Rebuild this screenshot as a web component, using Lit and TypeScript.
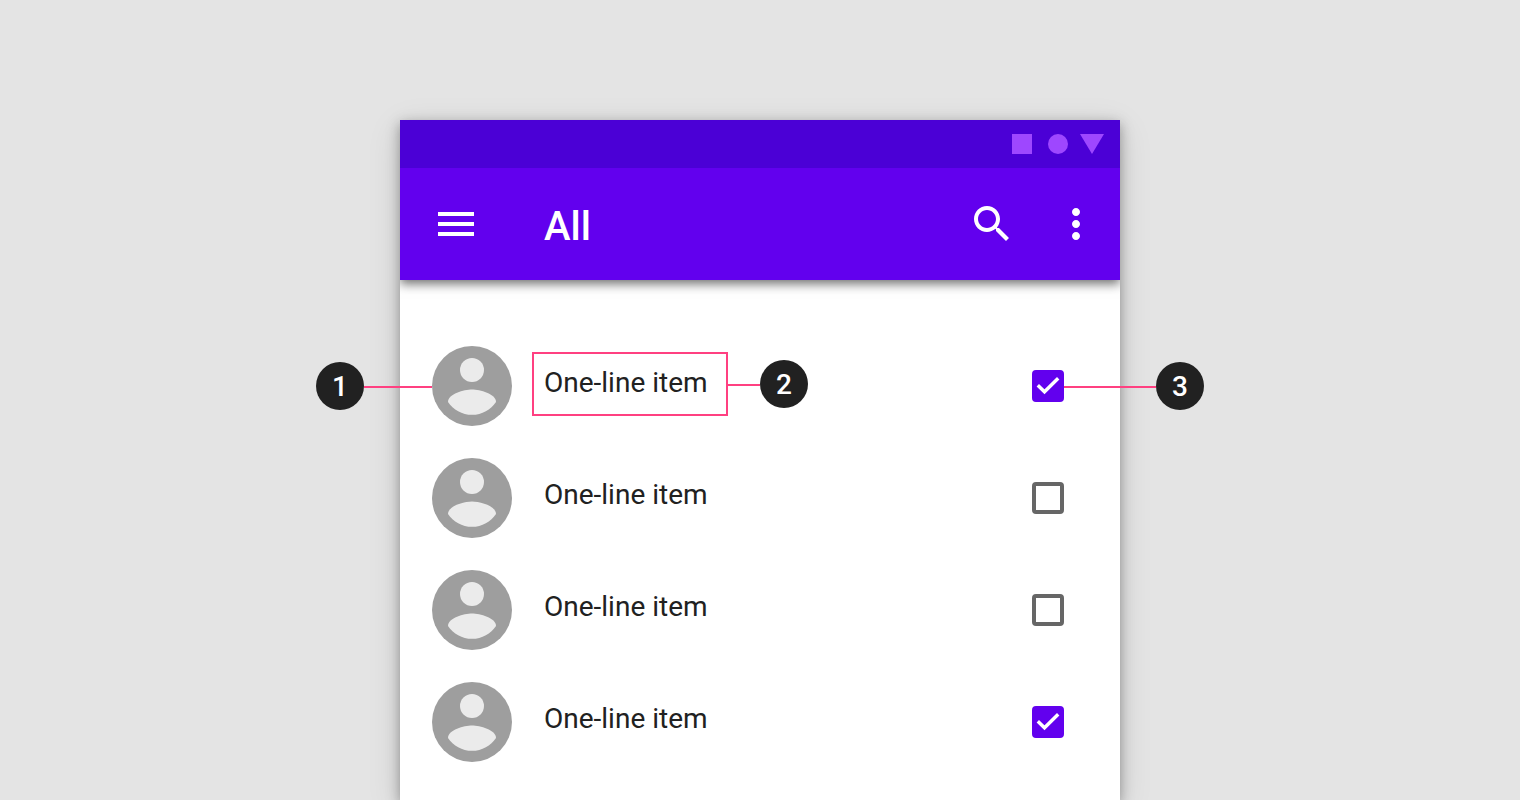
import { LitElement, html, css, nothing } from "lit";
import { customElement, property, state } from "lit/decorators.js";

@customElement("callout-badge")
export class CalloutBadge extends LitElement {
  @property() label = "";
  @property({ reflect: true }) side: "left" | "right" = "right";

  static styles = css`
    :host {
      position: absolute;
      left: 100%;
      top: 50%;
      display: flex;
      align-items: center;
      width: var(--reach, 140px);
      height: 48px;
      margin-top: -24px;
    }
    :host([side="left"]) {
      left: auto;
      right: 100%;
      flex-direction: row-reverse;
    }
    .line {
      flex: 1;
      box-sizing: border-box;
      height: 4px;
      border-bottom: 2px solid #ff4081;
    }
    .badge {
      box-sizing: border-box;
      width: 48px;
      height: 48px;
      padding-top: 1px;
      border-radius: 50%;
      background: #212121;
      color: #fff;
      font: 500 28px/48px Roboto, sans-serif;
      text-align: center;
    }
  `;

  render() {
    return html`<span class="line"></span><span class="badge">${this.label}</span>`;
  }
}

interface Item {
  text: string;
  checked: boolean;
}

@customElement("app-root")
export class AppRoot extends LitElement {
  @state() private items: Item[] = [
    { text: "One-line item", checked: true },
    { text: "One-line item", checked: false },
    { text: "One-line item", checked: false },
    { text: "One-line item", checked: true },
  ];

  static styles = css`
    :host {
      display: flex;
      justify-content: center;
      box-sizing: border-box;
      height: 100vh;
      padding-top: 120px;
      overflow: hidden;
      background: #e4e4e4;
      color: #212121;
      font-family: Roboto, sans-serif;
    }
    .device {
      width: 100%;
      max-width: 720px;
      background: #fff;
      box-shadow: 0 4px 12px rgba(0, 0, 0, 0.34), 0 8px 32px rgba(0, 0, 0, 0.12);
    }
    .top {
      background: #6200ee;
      color: #fff;
      box-shadow: 0 4px 10px rgba(0, 0, 0, 0.56);
      clip-path: inset(0 0 -20px 0);
    }
    .status {
      display: flex;
      align-items: center;
      justify-content: flex-end;
      height: 48px;
      padding: 0 16px;
      background: #4b00d6;
    }
    .bar {
      display: flex;
      align-items: center;
      height: 112px;
      padding: 0 20px 0 32px;
    }
    h1 {
      flex: 1;
      margin: 0;
      padding: 6px 0 0 64px;
      font-size: 40px;
      font-weight: 500;
      line-height: 48px;
    }
    button {
      width: 48px;
      height: 48px;
      padding: 0;
      border: 0;
      background: none;
      color: inherit;
    }
    .search {
      margin-right: 36px;
    }
    svg {
      display: block;
      fill: currentColor;
    }
    ul {
      margin: 0;
      padding: 50px 0 0;
      list-style: none;
    }
    li {
      display: flex;
      align-items: center;
      height: 112px;
      padding: 0 56px 0 32px;
    }
    .avatar {
      position: relative;
      --reach: 116px;
    }
    .text {
      flex: 1;
      padding: 0 0 6px 32px;
      font-size: 28px;
      line-height: 32px;
    }
    .words {
      position: relative;
    }
    .frame {
      position: absolute;
      left: -12px;
      top: -15px;
      box-sizing: border-box;
      width: 196px;
      height: 64px;
      border: 2px solid #ff4081;
      --reach: 82px;
    }
    .check {
      position: relative;
      --reach: 140px;
    }
    input {
      appearance: none;
      display: block;
      box-sizing: border-box;
      width: 32px;
      height: 32px;
      margin: 0;
      border: 4px solid #666;
      border-radius: 4px;
    }
    input:checked {
      border-color: #6200ee;
      background: #6200ee;
    }
    .tick {
      position: absolute;
      inset: 0;
      fill: none;
      stroke: #fff;
      stroke-width: 3.4;
      pointer-events: none;
    }
  `;

  private toggle(index: number) {
    this.items = this.items.map((item, i) =>
      i === index ? { ...item, checked: !item.checked } : item
    );
  }

  private row(item: Item, i: number) {
    const noted = i === 0;
    return html`<li>
      <div class="avatar">
        <svg width="80" height="80" viewBox="0 0 80 80" aria-hidden="true">
          <circle cx="40" cy="40" r="40" fill="#9e9e9e" />
          <circle cx="40" cy="24" r="12" fill="#ebebeb" />
          <path
            fill="#ebebeb"
            d="M40 68.8c-10 0-18.84-5.12-24-12.88.12-7.96 16-12.32 24-12.32 7.96 0 23.88 4.36 24 12.32-5.16 7.76-14 12.88-24 12.88z"
          />
        </svg>
        ${noted ? html`<callout-badge side="left" label="1"></callout-badge>` : nothing}
      </div>
      <div class="text">
        <div class="words">
          <label for="item-${i}">${item.text}</label>
          ${noted
            ? html`<div class="frame"><callout-badge label="2"></callout-badge></div>`
            : nothing}
        </div>
      </div>
      <div class="check">
        <input
          id="item-${i}"
          type="checkbox"
          .checked=${item.checked}
          @change=${() => this.toggle(i)}
        />
        ${item.checked
          ? html`<svg class="tick" width="32" height="32" viewBox="0 0 32 32" aria-hidden="true">
              <path d="M5.8 15.3l6.7 6.5L26.2 8.3" />
            </svg>`
          : nothing}
        ${noted ? html`<callout-badge label="3"></callout-badge>` : nothing}
      </div>
    </li>`;
  }

  render() {
    return html`<main class="device">
      <header class="top">
        <div class="status">
          <svg width="92" height="20" viewBox="0 0 92 20" aria-hidden="true">
            <g fill="#9e47ff">
              <path d="M0 0h20v20H0z" />
              <circle cx="46" cy="10" r="10" />
              <path d="M68 0h24L80 20z" />
            </g>
          </svg>
        </div>
        <div class="bar">
          <button aria-label="Menu">
            <svg width="48" height="48" viewBox="0 0 24 24">
              <path d="M3 18h18v-2H3v2zm0-5h18v-2H3v2zm0-7v2h18V6H3z" />
            </svg>
          </button>
          <h1>All</h1>
          <button class="search" aria-label="Search">
            <svg width="48" height="48" viewBox="0 0 24 24">
              <path
                d="M15.5 14h-.79l-.28-.27C15.41 12.59 16 11.11 16 9.5 16 5.91 13.09 3 9.5 3S3 5.91 3 9.5 5.91 16 9.5 16c1.61 0 3.09-.59 4.23-1.57l.27.28v.79l5 4.99L20.49 19l-4.99-5zm-6 0C7.01 14 5 11.99 5 9.5S7.01 5 9.5 5 14 7.01 14 9.5 11.99 14 9.5 14z"
              />
            </svg>
          </button>
          <button aria-label="More options">
            <svg width="48" height="48" viewBox="0 0 24 24">
              <path
                d="M12 8c1.1 0 2-.9 2-2s-.9-2-2-2-2 .9-2 2 .9 2 2 2zm0 2c-1.1 0-2 .9-2 2s.9 2 2 2 2-.9 2-2-.9-2-2-2zm0 6c-1.1 0-2 .9-2 2s.9 2 2 2 2-.9 2-2-.9-2-2-2z"
              />
            </svg>
          </button>
        </div>
      </header>
      <ul>
        ${this.items.map((item, i) => this.row(item, i))}
      </ul>
    </main>`;
  }
}
